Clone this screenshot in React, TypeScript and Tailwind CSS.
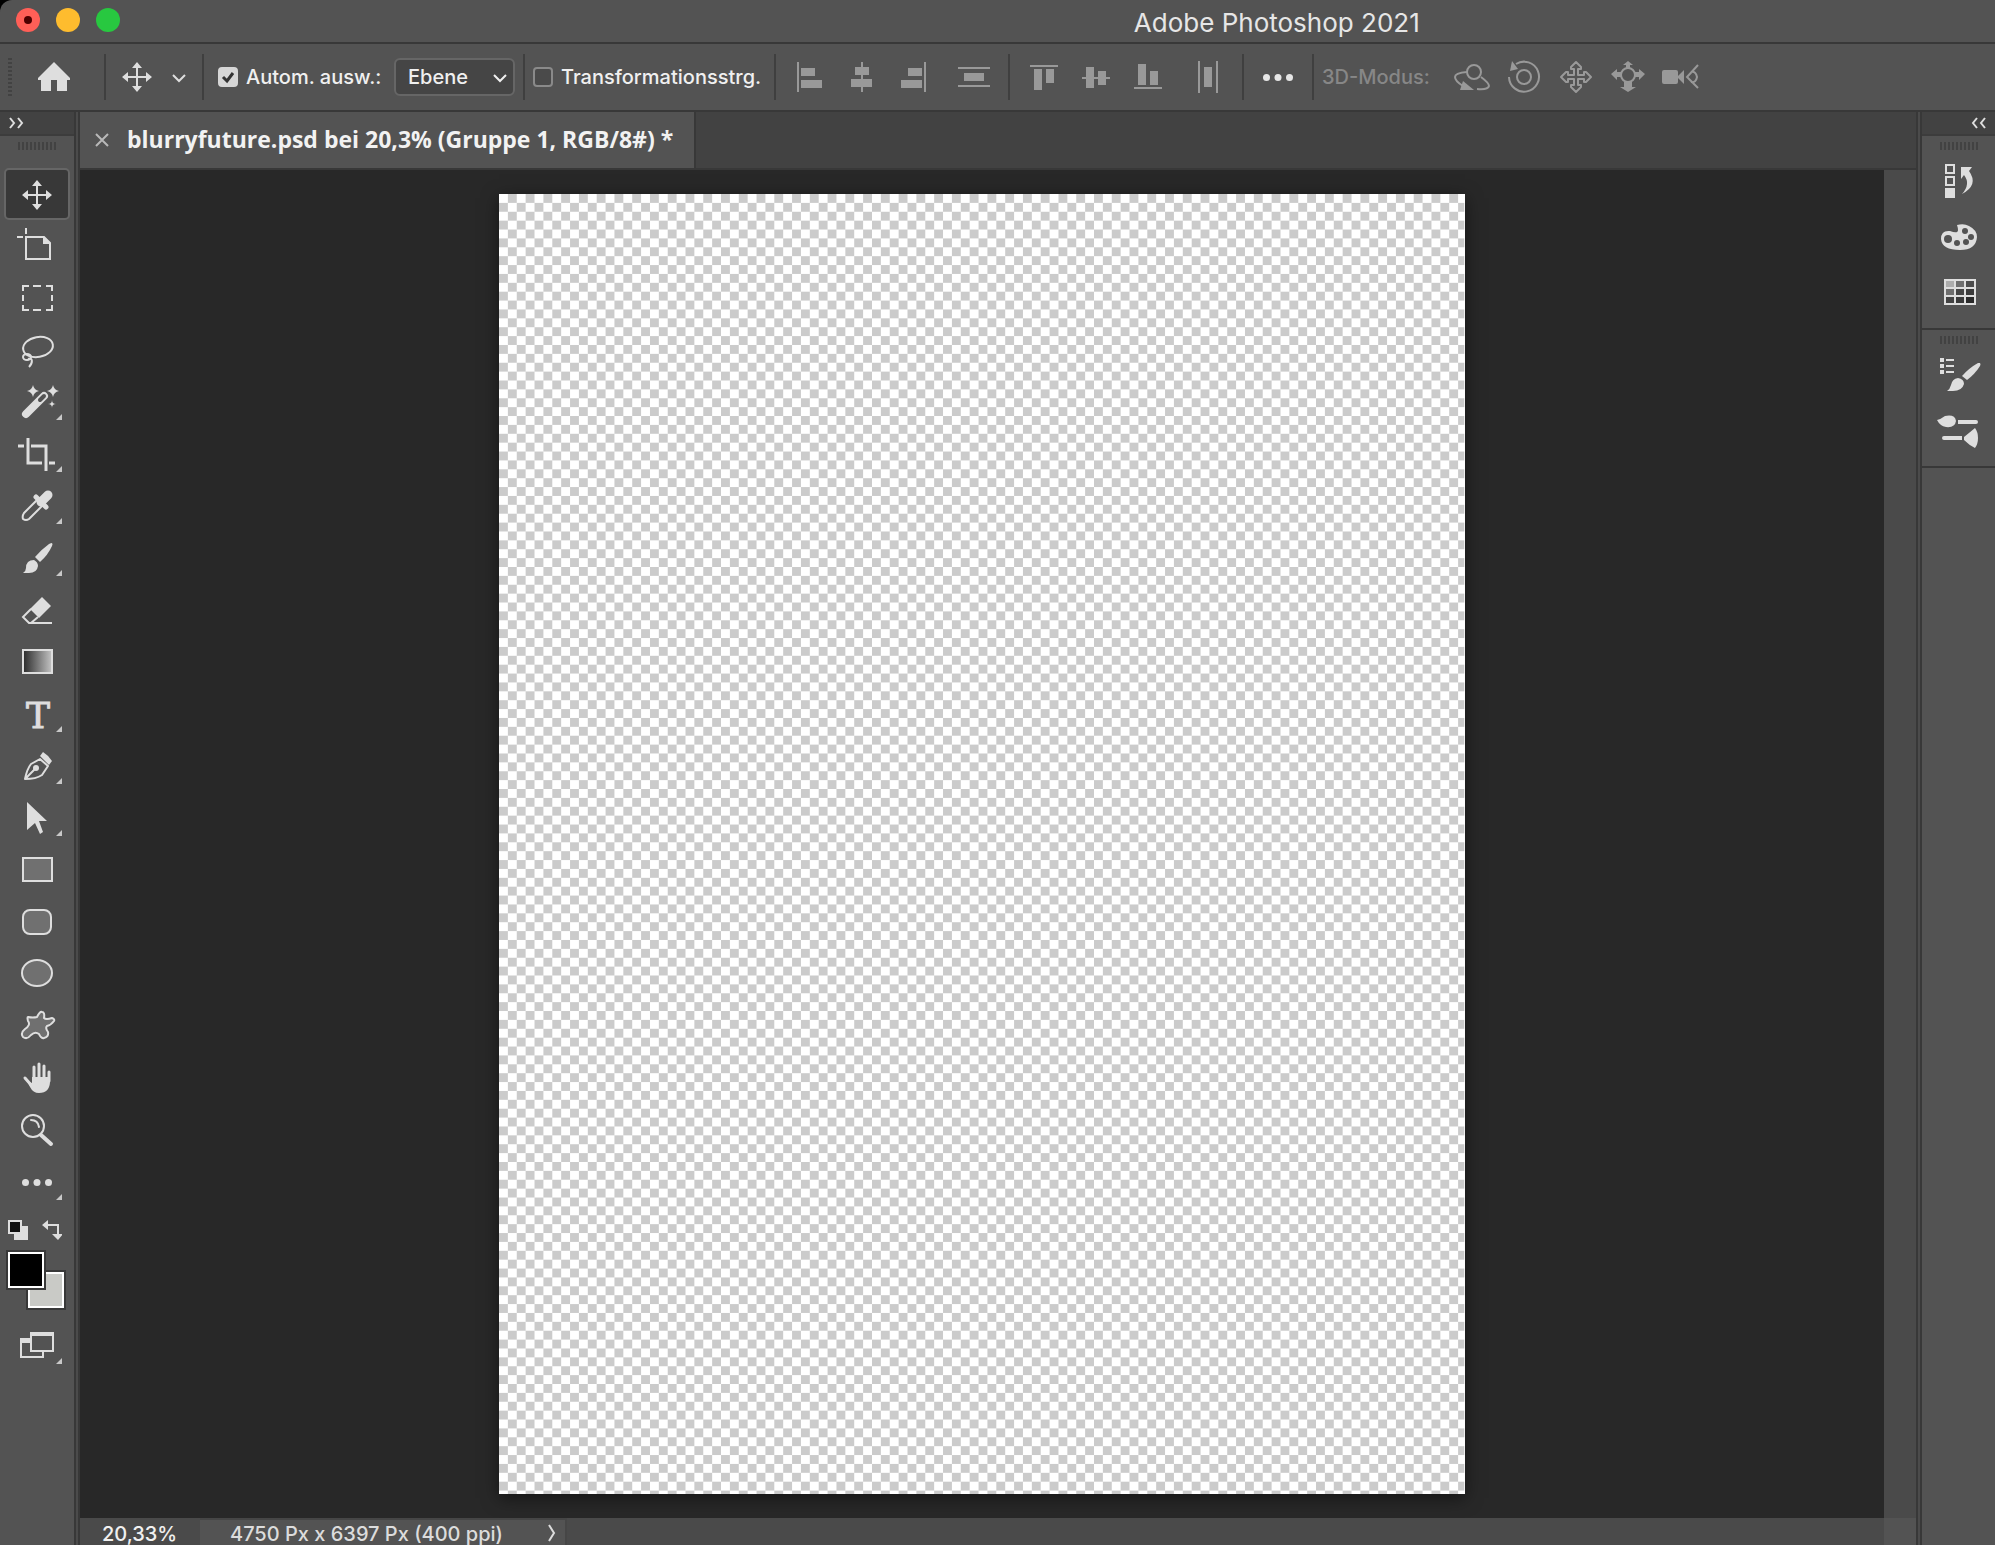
import type { ReactNode } from "react";
import { clsx } from "clsx";

type IconButtonProps = {
  label: string;
  width: number;
  height: number;
  className?: string;
  children: ReactNode;
};

function IconButton({
  label,
  width,
  height,
  className,
  children,
}: IconButtonProps) {
  return (
    <button
      type="button"
      aria-label={label}
      className={clsx("block shrink-0", className)}
    >
      <svg
        width={width}
        height={height}
        viewBox={`0 0 ${width} ${height}`}
        fill="currentColor"
        aria-hidden="true"
      >
        {children}
      </svg>
    </button>
  );
}

const line = {
  fill: "none",
  stroke: "currentColor",
  strokeWidth: 2,
} as const;

const shape = {
  fill: "#707070",
  stroke: "currentColor",
  strokeWidth: 2,
} as const;

type Tool = {
  label: string;
  hasMore?: boolean;
  icon: ReactNode;
};

const moveIcon = (
  <>
    <path d="M36 17h2v20h-2zM27 26h20v2H27z" />
    <path d="M37 12l5 6H32zM37 42l5-6H32zM22 27l6-5v10zM52 27l-6-5v10z" />
  </>
);

const tools: Tool[] = [
  { label: "Verschieben-Werkzeug", icon: moveIcon },
  {
    label: "Zeichenflächen-Werkzeug",
    icon: (
      <>
        <path d="M26 8v6M17 17h6" {...line} />
        <path d="M26 17h18l6 6v16H26z" {...line} />
        <path d="M43 16v8h8z" />
      </>
    ),
  },
  {
    label: "Auswahlrechteck-Werkzeug",
    icon: (
      <path
        d="M29 14h-6v5M33 14h8M46 14h6v5M23 23v6M52 23v6M23 33v5h6M33 38h8M46 38h6v-5"
        {...line}
      />
    ),
  },
  {
    label: "Lasso-Werkzeug",
    icon: (
      <>
        <ellipse
          cx="38"
          cy="23"
          rx="15"
          ry="10"
          transform="rotate(-10 38 23)"
          {...line}
        />
        <ellipse cx="27" cy="33" rx="4" ry="3" {...line} />
        <path d="M28 35c5-2 5 4 1 8" {...line} />
      </>
    ),
  },
  {
    label: "Zauberstab-Werkzeug",
    hasMore: true,
    icon: (
      <>
        <path
          d="M26 38l18-18"
          fill="none"
          stroke="currentColor"
          strokeWidth="8"
          strokeLinecap="round"
        />
        <path
          d="M40 24l4-4"
          fill="none"
          stroke="#535353"
          strokeWidth="4"
          strokeLinecap="round"
        />
        <path d="M33 9q1 5 6 6q-5 1-6 6q-1-5-6-6q5-1 6-6zM53 9q1 5 6 6q-5 1-6 6q-1-5-6-6q5-1 6-6zM52 24q0 4 4 4q-4 0-4 4q0-4-4-4q4 0 4-4z" />
      </>
    ),
  },
  {
    label: "Freistellungswerkzeug",
    hasMore: true,
    icon: (
      <path
        d="M28 10v25h14M18 18h6M31 18h15v25M49 35h6"
        fill="none"
        stroke="currentColor"
        strokeWidth="3"
      />
    ),
  },
  {
    label: "Pipette-Werkzeug",
    hasMore: true,
    icon: (
      <>
        <path
          d="M37 20L24 33q-2 3-1 6q3 2 6 0l14-14"
          strokeLinejoin="round"
          {...line}
        />
        <path
          d="M41 22l7-7"
          fill="none"
          stroke="currentColor"
          strokeWidth="9"
          strokeLinecap="round"
        />
        <path
          d="M36 17l10 10"
          fill="none"
          stroke="currentColor"
          strokeWidth="5"
          strokeLinecap="round"
        />
      </>
    ),
  },
  {
    label: "Pinsel-Werkzeug",
    hasMore: true,
    icon: (
      <>
        <path d="M52 11q1 1 0 3q-4 9-12 16l-5-5q7-8 14-13q2-1 3-1z" />
        <path d="M34 28q4 2 4 6q-1 7-9 7h-6q3-2 3-5q0-8 8-8z" />
      </>
    ),
  },
  {
    label: "Radiergummi-Werkzeug",
    icon: (
      <>
        <path d="M42 13l9 9-12 12-9-9z" />
        <path d="M31 25l-8 8 6 6h2l7-6M29 39h23" {...line} />
      </>
    ),
  },
  {
    label: "Verlaufswerkzeug",
    icon: (
      <>
        <defs>
          <linearGradient id="toolGradient">
            <stop offset="0" stopColor="#2a2a2a" />
            <stop offset="1" stopColor="#c4c4c4" />
          </linearGradient>
        </defs>
        <rect
          x="23"
          y="14"
          width="29"
          height="23"
          fill="url(#toolGradient)"
          stroke="currentColor"
          strokeWidth="2"
        />
      </>
    ),
  },
  {
    label: "Textwerkzeug",
    hasMore: true,
    icon: (
      <text
        x="38"
        y="40"
        textAnchor="middle"
        stroke="currentColor"
        className="font-['DejaVu_Serif',serif] text-[36px]"
      >
        T
      </text>
    ),
  },
  {
    label: "Zeichenstift-Werkzeug",
    hasMore: true,
    icon: (
      <>
        <path
          d="M25 39q2-10 6-15l9-5 8 7-6 9q-6 4-17 4zM25 39l11-11"
          strokeLinejoin="round"
          {...line}
        />
        <circle cx="36" cy="28" r="3" />
        <path d="M43 12q5 3 9 9l-3 4-9-9z" />
      </>
    ),
  },
  {
    label: "Pfadauswahl-Werkzeug",
    hasMore: true,
    icon: <path d="M27 10l20 19h-8l4 11-3 2-5-11-8 7z" />,
  },
  {
    label: "Rechteck-Werkzeug",
    icon: <rect x="23" y="14" width="29" height="23" {...shape} />,
  },
  {
    label: "Abgerundetes-Rechteck-Werkzeug",
    icon: <rect x="23" y="14" width="28" height="24" rx="7" {...shape} />,
  },
  {
    label: "Ellipse-Werkzeug",
    icon: <ellipse cx="37" cy="25" rx="15" ry="13" {...shape} />,
  },
  {
    label: "Eigene-Form-Werkzeug",
    icon: (
      <path
        d="M28 17q5 1 9 0q3-6 5-5q3 0 2 6q2 2 8 0q3 1 2 3q-3 4-7 5q-2 2 1 6q1 5-4 6q-3 1-5-4q-4-3-8 1q-4 5-8 2q-3-4 2-8q6-4 3-8q-1-4 0-4z"
        strokeLinejoin="round"
        {...shape}
      />
    ),
  },
  {
    label: "Hand-Werkzeug",
    icon: (
      <>
        <path
          d="M34 27V15M39 27V12M44 27V14M49 29V20M25 26l7 8"
          fill="none"
          stroke="currentColor"
          strokeWidth="3"
          strokeLinecap="round"
        />
        <path d="M32 25h17l1 4q0 12-11 12q-6 0-9-6l-3-6 5 2z" />
      </>
    ),
  },
  {
    label: "Zoom-Werkzeug",
    icon: (
      <>
        <circle cx="33" cy="22" r="11" {...line} />
        <path d="M31 16q7 0 8 7" strokeLinecap="round" {...line} />
        <path
          d="M41 31l10 9"
          fill="none"
          stroke="currentColor"
          strokeWidth="4"
          strokeLinecap="round"
        />
      </>
    ),
  },
  {
    label: "Symbolleiste bearbeiten",
    hasMore: true,
    icon: (
      <>
        <circle cx="25.5" cy="26.5" r="3.5" />
        <circle cx="37" cy="26.5" r="3.5" />
        <circle cx="48.5" cy="26.5" r="3.5" />
      </>
    ),
  },
];

const moreCorner = <path d="M62 38v6h-6z" fill="#c8c8c8" />;

const horizontalAlign = [
  {
    label: "Linke Kanten ausrichten",
    d: "M14 18h2v30h-2zM18 24h14v8H18zM18 36h21v8H18z",
  },
  {
    label: "Horizontale Mitten ausrichten",
    d: "M26 18h2v30h-2zM20 23h14v8H20zM16 35h21v8H16z",
  },
  {
    label: "Rechte Kanten ausrichten",
    d: "M37 18h2v30h-2zM21 24h14v8H21zM14 36h21v8H14z",
  },
];

const verticalAlign = [
  {
    label: "Obere Kanten ausrichten",
    d: "M12 21h28v2H12zM16 25h8v21h-8zM28 25h8v14h-8z",
  },
  {
    label: "Vertikale Mitten ausrichten",
    d: "M12 33h28v2H12zM16 23h8v21h-8zM28 27h8v14h-8z",
  },
  {
    label: "Untere Kanten ausrichten",
    d: "M12 43h28v2H12zM16 20h8v21h-8zM28 27h8v14h-8z",
  },
];

const modes3d = [
  {
    label: "3D-Kamera um Ursprung drehen",
    icon: (
      <>
        <circle cx="28" cy="28" r="7" {...line} />
        <path
          d="M21 28q-12 1-12 5q0 4 8 9M35 33q8 6 8 9q-1 4-12 3"
          {...line}
        />
        <path d="M17 37l11 9H14z" />
      </>
    ),
  },
  {
    label: "3D-Kamera rollen",
    icon: (
      <>
        <circle cx="26" cy="33" r="7" {...line} />
        <path d="M18 20A15 15 0 1 1 11 33" {...line} />
        <path d="M14 17l6 8-8 2z" />
      </>
    ),
  },
  {
    label: "3D-Kamera schwenken",
    icon: (
      <path
        d="M26 18l5 5v2h-3v6h6v-3h2l5 5-5 5h-2v-3h-6v6h3v2l-5 5-5-5v-2h3v-6h-6v3h-2l-5-5 5-5h2v3h6v-6h-3v-2z"
        strokeLinejoin="round"
        {...line}
      />
    ),
  },
  {
    label: "3D-Kamera verschieben",
    icon: (
      <>
        <circle cx="26" cy="31" r="7" {...line} />
        <path d="M26 17l5 4h-3v4h-4v-4h-3zM9 30l6-5v3h5v5h-5v3zM43 30l-6-5v3h-5v5h5v3zM26 48l8-5h-4v-5h-8v5h-4z" />
      </>
    ),
  },
  {
    label: "3D-Kamera zoomen",
    icon: (
      <>
        <rect x="8" y="26" width="16" height="14" rx="2" />
        <path d="M30 26v14l-6-6v-2z" />
        <path d="M44 21L33 33l11 11M37 28q5-1 6 5q-1 6-6 5" {...line} />
      </>
    ),
  },
];

const panelGroups = [
  [
    {
      label: "Protokoll",
      icon: (
        <>
          <path d="M24 12h8v8h-8zM24 24h8v8h-8z" {...line} />
          <path d="M23 35h10v10H23z" />
          <path d="M39 14h11l-3 4q10 14-7 23q9-10 2-19l-3 4z" />
        </>
      ),
    },
    {
      label: "Farbe",
      icon: (
        <>
          <path d="M35 16q7-2 12 1q8 4 8 11q-1 13-17 13q-18 0-19-11q0-9 9-8q8 3 8-1q0-2-1-5z" />
          <g fill="#535353">
            <circle cx="26" cy="30" r="4" />
            <circle cx="35" cy="34" r="3" />
            <circle cx="44" cy="33" r="3" />
            <circle cx="49" cy="28" r="3" />
            <circle cx="43" cy="22" r="3" />
          </g>
        </>
      ),
    },
    {
      label: "Farbfelder",
      icon: (
        <>
          <path d="M22 14h32v26H22z" />
          <path d="M24 16h8v6h-8z" fill="#adadad" />
          <path d="M34 16h8v6h-8zM24 24h8v6h-8z" fill="#6e6e6e" />
          <path d="M44 16h8v6h-8z" fill="#4c4c4c" />
          <path d="M34 24h8v6h-8zM24 32h8v6h-8z" fill="#444444" />
          <path d="M44 24h8v6h-8zM34 32h8v6h-8z" fill="#3a3a3a" />
          <path d="M44 32h8v6h-8z" fill="#2a2a2a" />
        </>
      ),
    },
  ],
  [
    {
      label: "Pinseleinstellungen",
      icon: (
        <>
          <path d="M18 11h4v4h-4zM18 17h4v4h-4zM18 23h4v4h-4zM24 12h8v2h-8zM24 18h8v2h-8zM24 24h8v2h-8z" />
          <path d="M58 16q1 1 0 3q-5 8-13 14l-5-4q7-8 16-13z" />
          <path d="M36 31q6 1 6 6q-2 7-11 7h-6q3-2 4-6q1-6 7-7z" />
        </>
      ),
    },
    {
      label: "Pinsel",
      icon: (
        <>
          <path d="M15 17q4-1 8-4q10-2 11 5q-1 7-10 6q-6-1-9-7z" />
          <path d="M36 17h18q2 0 2 2t-2 2H36zM40 33H22q-2 0-2 2t2 2h18z" />
          <path d="M42 34q5-4 11-9q3 4 3 10t-3 10q-6-3-11-8z" />
        </>
      ),
    },
  ],
];

function Separator({ className }: { className?: string }) {
  return (
    <div
      className={clsx("my-2.5 w-0.5 shrink-0 bg-[#3f3f3f]", className)}
    />
  );
}

function Chevron({ className }: { className?: string }) {
  return (
    <svg
      width="14"
      height="10"
      viewBox="0 0 14 10"
      aria-hidden="true"
      className={className}
    >
      <path
        d="M1 1l6 6 6-6"
        fill="none"
        stroke="currentColor"
        strokeWidth="2"
      />
    </svg>
  );
}

function Grip() {
  return (
    <div className="h-2 w-[38px] bg-[repeating-linear-gradient(90deg,#424242_0_2px,transparent_2px_4px)]" />
  );
}

function CheckOption({
  id,
  label,
  defaultChecked,
}: {
  id: string;
  label: string;
  defaultChecked?: boolean;
}) {
  return (
    <div className="flex items-center gap-2">
      <div className="relative h-5 w-5 shrink-0">
        <input
          id={id}
          type="checkbox"
          defaultChecked={defaultChecked}
          className="peer block h-5 w-5 appearance-none rounded border-2 border-[#8a8a8a] bg-[#4a4a4a] checked:border-[#d6d6d6] checked:bg-[#d6d6d6]"
        />
        <svg
          viewBox="0 0 20 20"
          aria-hidden="true"
          className="pointer-events-none absolute inset-0 hidden peer-checked:block"
        >
          <path
            d="M5 10l4 4 6-8"
            fill="none"
            stroke="#333333"
            strokeWidth="3"
          />
        </svg>
      </div>
      <label htmlFor={id} className="whitespace-nowrap">
        {label}
      </label>
    </div>
  );
}

function TitleBar() {
  return (
    <header className="flex h-11 shrink-0 border-b-2 border-[#383838]">
      <div className="flex flex-1 gap-4 pt-2 pl-4">
        <button
          type="button"
          aria-label="Schließen"
          className="flex h-6 w-6 items-center justify-center rounded-full bg-[#ff5f57]"
        >
          <span className="h-2 w-2 rounded-full bg-[#4d0000]" />
        </button>
        <button
          type="button"
          aria-label="Minimieren"
          className="h-6 w-6 rounded-full bg-[#febc2e]"
        />
        <button
          type="button"
          aria-label="Vollbild"
          className="h-6 w-6 rounded-full bg-[#28c840]"
        />
      </div>
      <h1 className="w-[72%] pt-2 text-center text-[26px] leading-[30px] text-[#e6e6e6]">
        Adobe Photoshop 2021
      </h1>
    </header>
  );
}

function OptionsBar() {
  return (
    <div className="flex h-[68px] shrink-0 overflow-hidden border-b-2 border-[#383838] text-xl font-medium text-[#f0f0f0]">
      <div className="flex w-[104px] shrink-0 items-center">
        <div className="ml-2 h-[38px] w-1 bg-[repeating-linear-gradient(180deg,#424242_0_2px,transparent_2px_4px)]" />
        <IconButton
          label="Startseite"
          width={92}
          height={66}
          className="text-[#dedede]"
        >
          <path d="M42 18l16 16v2h-3v11H45V36h-6v11H29V36h-3v-2z" />
        </IconButton>
      </div>
      <Separator />
      <button
        type="button"
        aria-label="Werkzeugvorgaben"
        className="flex w-24 shrink-0 items-center gap-5 pl-4 text-[#dedede]"
      >
        <svg
          width="30"
          height="30"
          viewBox="22 12 30 30"
          fill="currentColor"
          aria-hidden="true"
        >
          {moveIcon}
        </svg>
        <Chevron className="mt-1" />
      </button>
      <Separator />
      <div className="flex w-[319px] shrink-0 items-center justify-between pr-2 pl-3.5">
        <CheckOption id="auto-select" label="Autom. ausw.:" defaultChecked />
        <div className="relative">
          <select
            aria-label="Automatisch auswählen"
            className="h-[38px] w-[121px] appearance-none rounded-md border-2 border-[#666666] bg-[#454545] pl-3"
          >
            <option>Ebene</option>
            <option>Gruppe</option>
          </select>
          <Chevron className="pointer-events-none absolute top-4 right-2" />
        </div>
      </div>
      <Separator />
      <div className="flex w-[249px] shrink-0 items-center pl-2">
        <CheckOption id="transform-controls" label="Transformationsstrg." />
      </div>
      <Separator />
      <div className="flex pl-[7px] text-[#999999]">
        {horizontalAlign.map((item) => (
          <IconButton
            key={item.label}
            label={item.label}
            width={52}
            height={66}
          >
            <path d={item.d} />
          </IconButton>
        ))}
        <IconButton label="Vertikal verteilen" width={69} height={66}>
          <path d="M19 23h32v2H19zM19 41h32v2H19zM25 29h20v8H25z" />
        </IconButton>
      </div>
      <Separator />
      <div className="flex pl-2 text-[#999999]">
        {verticalAlign.map((item) => (
          <IconButton
            key={item.label}
            label={item.label}
            width={52}
            height={66}
          >
            <path d={item.d} />
          </IconButton>
        ))}
        <IconButton label="Horizontal verteilen" width={68} height={66}>
          <path d="M24 17h2v32h-2zM42 17h2v32h-2zM30 23h8v20h-8z" />
        </IconButton>
      </div>
      <Separator />
      <IconButton
        label="Ausrichtungsoptionen"
        width={68}
        height={66}
        className="text-[#e6e6e6]"
      >
        <circle cx="22.5" cy="33.5" r="3.5" />
        <circle cx="34" cy="33.5" r="3.5" />
        <circle cx="45.5" cy="33.5" r="3.5" />
      </IconButton>
      <Separator />
      <div className="flex w-[132px] shrink-0 items-center pl-2 text-[#878787]">
        3D-Modus:
      </div>
      <div className="flex text-[#999999]">
        {modes3d.map((mode) => (
          <IconButton
            key={mode.label}
            label={mode.label}
            width={52}
            height={66}
          >
            {mode.icon}
          </IconButton>
        ))}
      </div>
    </div>
  );
}

function Toolbar() {
  return (
    <aside className="w-[74px] shrink-0 text-[#dedede]">
      <div className="flex h-6 items-center border-b-2 border-[#3c3c3c] bg-[#424242] pl-2">
        <button type="button" aria-label="Werkzeugleiste erweitern">
          <svg width="16" height="12" viewBox="0 0 16 12" aria-hidden="true">
            <path d="M2 1l4 5-4 5M10 1l4 5-4 5" {...line} />
          </svg>
        </button>
      </div>
      <div className="flex h-8 justify-center pt-1.5">
        <Grip />
      </div>
      <nav aria-label="Werkzeuge">
        {tools.map((tool, index) => (
          <IconButton
            key={tool.label}
            label={tool.label}
            width={74}
            height={52}
          >
            {index === 0 && (
              <rect
                x="5"
                y="1"
                width="64"
                height="50"
                rx="4"
                fill="#383838"
                stroke="#666666"
                strokeWidth="2"
              />
            )}
            {tool.icon}
            {tool.hasMore && moreCorner}
          </IconButton>
        ))}
      </nav>
      <div className="h-28 pt-3">
        <div className="flex gap-3.5 pl-2">
          <button type="button" aria-label="Standardfarben">
            <svg width="20" height="20" viewBox="0 0 20 20" aria-hidden="true">
              <path d="M6 6h14v14H6z" fill="currentColor" />
              <path
                d="M1 1h12v12H1z"
                fill="#111111"
                stroke="currentColor"
                strokeWidth="2"
              />
            </svg>
          </button>
          <button type="button" aria-label="Farben vertauschen">
            <svg
              width="20"
              height="20"
              viewBox="0 0 20 20"
              fill="currentColor"
              aria-hidden="true"
            >
              <path d="M5 5h11v9" {...line} />
              <path d="M0 5l6-5v10zM10 14h11l-5 6z" />
            </svg>
          </button>
        </div>
        <div className="relative mt-2.5 ml-1.5 h-[60px] w-[60px]">
          <button
            type="button"
            aria-label="Hintergrundfarbe"
            className="absolute right-0 bottom-0 h-10 w-10 border-2 border-[#383838] bg-white p-0.5"
          >
            <span className="block h-full bg-[#c9cac6]" />
          </button>
          <button
            type="button"
            aria-label="Vordergrundfarbe"
            className="absolute top-0 left-0 h-10 w-10 border-2 border-[#383838] bg-white p-0.5"
          >
            <span className="block h-full bg-black" />
          </button>
        </div>
      </div>
      <IconButton label="Bildschirmmodus" width={74} height={52}>
        <path d="M30 22h-9v15h22v-6" {...line} />
        <path d="M20 18h10v4H20z" />
        <path d="M31 13h22v18H31z" {...line} />
        <path d="M30 12h24v4H30z" />
        {moreCorner}
      </IconButton>
    </aside>
  );
}

function TransparencyGrid() {
  return (
    <svg
      viewBox="0 0 4750 6397"
      role="img"
      aria-label="Transparente Leinwand"
      className="h-full bg-white shadow-[0_4px_16px_rgba(0,0,0,0.5)]"
    >
      <defs>
        <pattern
          id="transparency"
          width="87.4"
          height="87.4"
          patternUnits="userSpaceOnUse"
        >
          <path
            d="M43.7 0h43.7v43.7H43.7zM0 43.7h43.7v43.7H0z"
            fill="#cbcbcb"
          />
        </pattern>
      </defs>
      <rect width="4750" height="6397" fill="url(#transparency)" />
    </svg>
  );
}

function DocumentArea() {
  return (
    <main className="flex min-w-0 flex-1 flex-col">
      <div className="flex h-[58px] shrink-0 border-b-2 border-[#383838] bg-[#424242]">
        <div className="flex w-[616px] items-center gap-[18px] border-r-2 border-[#383838] bg-[#535353] pl-[15px]">
          <button
            type="button"
            aria-label="Dokument schließen"
            className="text-[#b8b8b8]"
          >
            <svg width="14" height="14" viewBox="0 0 14 14" aria-hidden="true">
              <path d="M1 1l12 12M13 1L1 13" {...line} />
            </svg>
          </button>
          <span className="pb-0.5 font-['Open_Sans',sans-serif] text-[23px] leading-8 font-bold whitespace-nowrap text-[#f2f2f2]">
            blurryfuture.psd bei 20,3% (Gruppe 1, RGB/8#) *
          </span>
        </div>
      </div>
      <div className="flex min-h-0 flex-1">
        <div className="flex min-w-0 flex-1 justify-center bg-[#282828] py-6">
          <TransparencyGrid />
        </div>
        <div className="w-8 shrink-0 bg-[#4a4a4a]" />
      </div>
      <footer className="flex h-[27px] shrink-0 bg-[#4a4a4a] text-xl leading-8 font-medium">
        <div className="w-[120px] overflow-hidden pl-[22px] text-[#f0f0f0]">
          20,33%
        </div>
        <div className="flex w-[367px] justify-between overflow-hidden border-t-2 border-r-2 border-[#464646] bg-[#535353] pr-2 pl-[30px] leading-7 text-[#dcdcdc]">
          <span>4750 Px x 6397 Px (400 ppi)</span>
          <button type="button" aria-label="Statusinformationen">
            <svg width="10" height="18" viewBox="0 0 10 18" aria-hidden="true">
              <path d="M2 1l5 8-5 8" {...line} />
            </svg>
          </button>
        </div>
        <div className="ml-auto w-8 bg-[#535353]" />
      </footer>
    </main>
  );
}

function PanelDock() {
  return (
    <aside className="w-[73px] shrink-0 text-[#dedede]">
      <div className="flex h-6 items-center justify-end border-b-2 border-[#3c3c3c] bg-[#424242] pr-2">
        <button type="button" aria-label="Bedienfelder erweitern">
          <svg width="16" height="12" viewBox="0 0 16 12" aria-hidden="true">
            <path d="M6 1L2 6l4 5M14 1l-4 5 4 5" {...line} />
          </svg>
        </button>
      </div>
      {panelGroups.map((group) => (
        <section
          key={group[0].label}
          className="border-b-2 border-[#383838] pb-[7px]"
        >
          <div className="flex h-[17px] justify-center pt-1.5">
            <Grip />
          </div>
          {group.map((panel) => (
            <IconButton
              key={panel.label}
              label={panel.label}
              width={73}
              height={56}
            >
              {panel.icon}
            </IconButton>
          ))}
        </section>
      ))}
    </aside>
  );
}

function Divider() {
  return (
    <div className="w-1.5 shrink-0 border-x-2 border-[#383838] bg-[#4b4b4b]" />
  );
}

export default function App() {
  return (
    <div className="h-screen bg-black">
      <div className="flex h-full flex-col overflow-hidden rounded-tl-xl bg-[#535353] font-['Inter',sans-serif]">
        <TitleBar />
        <OptionsBar />
        <div className="flex min-h-0 flex-1">
          <Toolbar />
          <Divider />
          <DocumentArea />
          <Divider />
          <PanelDock />
        </div>
      </div>
    </div>
  );
}
